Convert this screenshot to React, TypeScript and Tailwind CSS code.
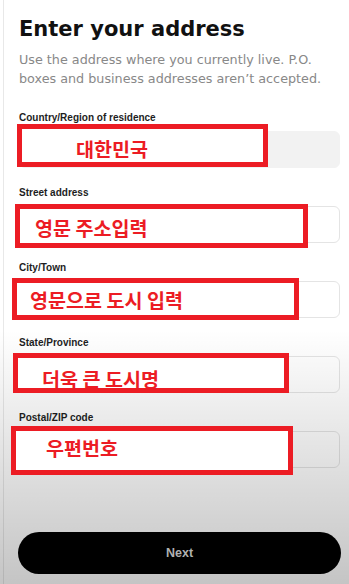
const fields = [
  {
    label: 'Country/Region of residence',
    note: '대한민국',
    input: 'border-[#f2f2f2] bg-[#f2f2f2]',
    box: 'left-[-2px] top-[12.5px] h-[43px] w-[251px] pl-[54px] pt-[10px]',
  },
  {
    label: 'Street address',
    note: '영문 주소입력',
    input: 'border-[#e4e4e4] bg-white',
    box: 'left-[-4px] top-[17.5px] h-[43.5px] w-[292.5px] pl-[15px] pt-[8.5px]',
  },
  {
    label: 'City/Town',
    note: '영문으로 도시 입력',
    input: 'border-[#e4e4e4] bg-white',
    box: 'left-[-7px] top-[16.5px] h-[42px] w-[287px] pl-[13px] pt-[6.5px]',
  },
  {
    label: 'State/Province',
    note: '더욱 큰 도시명',
    input: 'border-[#e4e4e4] bg-white',
    box: 'left-[-6px] top-[16px] h-[40.5px] w-[276px] pl-[24px] pt-[11px]',
  },
  {
    label: 'Postal/ZIP code',
    note: '우편번호',
    input: 'border-[#e4e4e4] bg-white',
    box: 'left-[-8px] top-[14.5px] h-[49px] w-[282px] pl-[30px] pt-[6.5px]',
  },
];

export default function App() {
  return (
    <div className="relative h-[584px] w-[349px] overflow-hidden bg-white pl-[3px]">
      <div className="h-full border-l border-[#e8e8e8] pl-[15px] pr-[9px] pt-[15px]">
        <h1 className="font-['DejaVu_Sans',sans-serif] text-[21px] font-bold leading-[28px] text-[#111]">
          Enter your address
        </h1>
        <p className="mt-[6.5px] font-['DejaVu_Sans',sans-serif] text-[12.75px] leading-[19.5px] text-[#888]">
          Use the address where you currently live. P.O.
          <br />
          boxes and business addresses aren’t accepted.
        </p>

        <div className="mt-[23px] flex flex-col gap-[19px]">
          {fields.map((field) => (
            <div key={field.label} className="relative">
              <label className="block font-['Liberation_Sans',sans-serif] text-[10px] font-bold leading-[12px] text-[#1e1e1e]">
                {field.label}
              </label>
              <div className={`mt-[7px] h-[37px] rounded-[6px] border ${field.input}`} />
              <div
                className={`absolute z-10 flex items-start whitespace-nowrap border-[5px] border-[#ec1c24] bg-white font-['Noto_Sans_CJK_KR',sans-serif] text-[19.6px] font-bold leading-[19.6px] text-[#ec1c24] ${field.box}`}
              >
                {field.note}
              </div>
            </div>
          ))}
        </div>

        <div className="relative z-10 -mx-px mt-[64.5px]">
          <button className="flex h-[42px] w-full items-center justify-center rounded-full bg-black font-['Liberation_Sans',sans-serif] text-[12.5px] font-bold text-[#b0b0b0]">
            Next
          </button>
        </div>
      </div>

      <div className="pointer-events-none absolute inset-x-0 bottom-0 h-[254px] bg-linear-to-b from-black/0 to-black/[0.23]" />
    </div>
  );
}
